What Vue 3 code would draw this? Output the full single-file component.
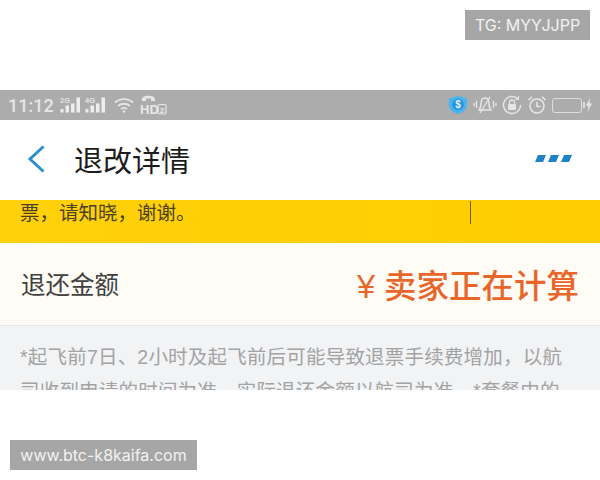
<template>
  <div class="page">
    <div class="tag tag-top">TG: MYYJJPP</div>

    <div class="screen">
      <div class="status">
        <div class="status-left">
          <span class="time">11:12</span>
          <svg width="21" height="18" viewBox="0 0 21 18" class="ic">
            <text x="0" y="6.500" font-size="7.500" font-weight="700" fill="#e4e4e4" font-family="Liberation Sans, sans-serif">2G</text>
            <path d="M0.500 13h3v3.500h-3zM5.500 9.500H9v7H5.500zM11 7.500h3.500v9H11zM16.500 1.500H20v15h-3.500z" fill="#eeeeee" />
          </svg>
          <svg width="21" height="18" viewBox="0 0 21 18" class="ic">
            <text x="0" y="6.500" font-size="7.500" font-weight="700" fill="#e4e4e4" font-family="Liberation Sans, sans-serif">4G</text>
            <path d="M0.500 13h3v3.500h-3zM5.500 9.500H9v7H5.500zM11 7.500h3.500v9H11zM16.500 1.500H20v15h-3.500z" fill="#eeeeee" />
          </svg>
          <svg width="20" height="16" viewBox="0 0 20 16" class="ic wifi">
            <path d="M1 5.500C6 1 14 1 19 5.500M4 9c3.500-3 8.500-3 12 0M7 12c2-1.500 4-1.500 6 0" fill="none" stroke="#e6e6e6" stroke-width="1.800" />
            <circle cx="10" cy="14.500" r="1.300" fill="#e6e6e6" />
          </svg>
          <svg width="27" height="22" viewBox="0 0 27 22" class="ic hd">
            <path d="M2 7V5c0-4.500 13-4.500 13 0v2h-4V4.500H6V7z" fill="#e6e6e6" />
            <text x="0" y="20" font-size="13" font-weight="700" fill="#e8e8e8" font-family="Liberation Sans, sans-serif">HD</text>
            <rect x="18" y="10.500" width="8" height="9.500" rx="1.500" fill="none" stroke="#e8e8e8" stroke-width="1.200" />
            <text x="19.800" y="18.500" font-size="8" font-weight="700" fill="#e8e8e8" font-family="Liberation Sans, sans-serif">2</text>
          </svg>
        </div>
        <div class="status-right">
          <svg width="20" height="20" viewBox="0 0 20 20" class="ic">
            <path d="M10 1l9 2.500v6c0 5-4 8-9 9.500-5-1.500-9-4.500-9-9.500v-6z" fill="#45b4f0" />
            <circle cx="10" cy="9.500" r="5.800" fill="#2a92d8" />
            <text x="10" y="13" font-size="10" font-weight="700" text-anchor="middle" fill="#dff2fc" font-family="Liberation Sans, sans-serif">$</text>
          </svg>
          <svg width="24" height="20" viewBox="0 0 24 20" class="ic">
            <path d="M12 3c-3 0-4 3-4 6 0 3-1 4-2 6h12c-1-2-2-3-2-6 0-3-1-6-4-6z" fill="none" stroke="#e6e6e6" stroke-width="1.500" />
            <path d="M7 18L17 2M3.500 6v7M1 8v3M20.500 6v7M23 8v3" fill="none" stroke="#e6e6e6" stroke-width="1.400" />
          </svg>
          <svg width="20" height="20" viewBox="0 0 20 20" class="ic">
            <path d="M18.500 10a8.500 8.500 0 1 1-2.500-6" fill="none" stroke="#e6e6e6" stroke-width="1.500" />
            <path d="M16.500 1v3.500H13" fill="none" stroke="#e6e6e6" stroke-width="1" />
            <rect x="6" y="9" width="8" height="6" rx="1" fill="#e6e6e6" />
            <path d="M7.500 9V7.500a2.500 2.500 0 0 1 5 0V9" fill="none" stroke="#e6e6e6" stroke-width="1.300" />
          </svg>
          <svg width="20" height="20" viewBox="0 0 20 20" class="ic">
            <circle cx="10" cy="11" r="7" fill="none" stroke="#e6e6e6" stroke-width="1.600" />
            <path d="M10 7v4.500h3.500M1.500 5L5 1.800M18.500 5L15 1.800" fill="none" stroke="#e6e6e6" stroke-width="1.600" />
          </svg>
          <div class="battery"></div>
          <svg width="8" height="16" viewBox="0 0 8 16" class="bolt">
            <path d="M5 1L1 9h2.500L2.500 15 7 6.500H4.500z" fill="#e6e6e6" />
          </svg>
        </div>
      </div>

      <div class="nav">
        <svg width="20" height="30" viewBox="0 0 20 30" class="back">
          <path d="M17.500 2.500L4 15l13.500 12.500" fill="none" stroke="#2b8fcb" stroke-width="3" />
        </svg>
        <span class="title">退改详情</span>
        <svg width="38" height="10" viewBox="0 0 38 10" class="more">
          <path d="M3 1h8l-3 7H0zM16 1h8l-3 7h-8zM29 1h8l-3 7h-8z" fill="#1f82c4" />
        </svg>
      </div>

      <div class="notice">
        <span>票，请知晓，谢谢。</span>
        <i class="cursor"></i>
      </div>

      <div class="refund">
        <span class="refund-label">退还金额</span>
        <span class="refund-value"><b>¥</b>卖家正在计算</span>
      </div>

      <div class="note">
        *起飞前7日、2小时及起飞前后可能导致退票手续费增加，以航司收到申请的时间为准，实际退还金额以航司为准。*套餐中的
      </div>
    </div>

    <div class="tag tag-bottom">www.btc-k8kaifa.com</div>
  </div>
</template>

<script setup>
</script>

<style scoped>
.page {
  position: relative;
  width: 600px;
  height: 480px;
  padding-top: 90px;
  box-sizing: border-box;
  background: #fff;
  overflow: hidden;
  font-family: "Liberation Sans", "Noto Sans CJK SC", sans-serif;
}

.tag {
  position: absolute;
  height: 30px;
  line-height: 30px;
  background: #a6a6a6;
  color: #f2f2f2;
  font-family: "Inter", "Liberation Sans", sans-serif;
  font-size: 16px;
  text-align: center;
}

.tag-top {
  top: 10px;
  right: 10px;
  width: 125px;
}

.tag-bottom {
  top: 440px;
  left: 10px;
  width: 187px;
}

.screen {
  height: 300px;
  overflow: hidden;
}

.status {
  display: flex;
  justify-content: space-between;
  align-items: center;
  height: 30px;
  background: #acacac;
  padding: 0 7px 0 8px;
}

.status-left,
.status-right {
  display: flex;
  align-items: center;
}

.status-left {
  gap: 4px;
}

.status-right {
  gap: 5px;
}

.time {
  margin-right: 2px;
  color: #e6e6e6;
  font-family: "Roboto", sans-serif;
  font-size: 18px;
  font-weight: 500;
}

.ic {
  display: block;
}

.wifi {
  margin-left: 4px;
}

.hd {
  margin-left: 2px;
}

.battery {
  position: relative;
  width: 28px;
  height: 13px;
  border: 1.500px solid #dedede;
  border-radius: 3px;
}

.battery::after {
  content: "";
  position: absolute;
  top: 3px;
  right: -4px;
  width: 2px;
  height: 6px;
  background: #dedede;
}

.bolt {
  margin-left: -2px;
}

.nav {
  display: flex;
  align-items: center;
  height: 80px;
  padding: 0 27px 2px 26px;
  box-sizing: border-box;
  background: #fff;
}

.back {
  margin-right: 28px;
}

.title {
  flex: 1;
  color: #1c1c1c;
  font-size: 29px;
}

.notice {
  display: flex;
  justify-content: space-between;
  height: 43px;
  padding: 1px 0 0 20px;
  box-sizing: border-box;
  background: linear-gradient(90deg, #ffd10a, #ffcd00);
  color: #4a4020;
  font-size: 19.500px;
  line-height: 24px;
}

.cursor {
  display: block;
  width: 1px;
  height: 23px;
  margin-right: 129px;
  background: #6f5f10;
}

.refund {
  display: flex;
  justify-content: space-between;
  align-items: center;
  height: 83px;
  padding: 0 21px 2px;
  box-sizing: border-box;
  background: #fffcf6;
  border-bottom: 1px solid #e8e8e6;
}

.refund-label {
  color: #404040;
  font-size: 24.500px;
}

.refund-value {
  color: #e8662a;
  font-size: 32.500px;
  font-weight: 500;
}

.refund-value b {
  font-weight: 500;
  margin-right: 9px;
}

.note {
  padding: 14px 37px 0 20px;
  background: #f2f3f5;
  height: 64px;
  color: #a3a3a3;
  font-size: 19.500px;
  letter-spacing: 0.200px;
  line-height: 34px;
}
</style>
